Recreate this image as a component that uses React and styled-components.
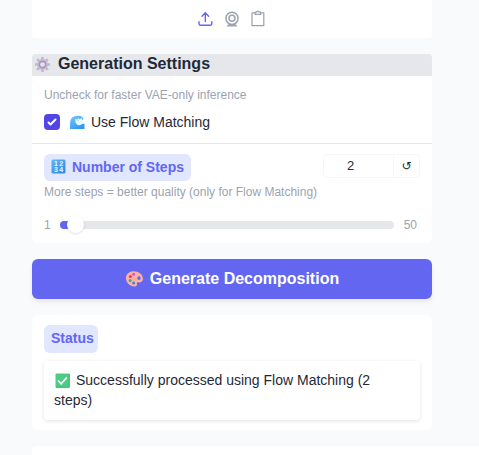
import React from "react";
import styled, { createGlobalStyle } from "styled-components";

const Global = createGlobalStyle`
  * { box-sizing: border-box; }
  html, body { margin: 0; height: 100%; overflow: hidden; }
  body { background: #f9fafc; color: #1f2937; font-family: "Liberation Sans", Arial, sans-serif; }
`;
const Page = styled.main`
  display: flex;
  flex-direction: column;
  gap: 16px;
  width: 479px;
  height: 455px;
  padding-left: 32px;
  overflow: hidden;
`;
const Card = styled.section`
  flex: none;
  width: 400px;
  background: #fff;
  border-radius: 6px;
  overflow: hidden;
`;
const Sources = styled(Card)`
  display: flex;
  justify-content: center;
  gap: 8px;
  height: 38px;
  padding: 10px 3px 0 0;
  border-radius: 0 0 4px 4px;
  svg { display: block; }
`;
const Settings = styled(Card)`
  height: 189px;
  border-radius: 4px 4px 6px 6px;
`;
const Heading = styled.h3`
  display: flex;
  align-items: center;
  gap: 7px;
  height: 22px;
  margin: 0;
  padding: 0 0 2px 2px;
  background: #e5e7eb;
  font-size: 16px;
  line-height: 20px;
  white-space: nowrap;
`;
const Label = styled.span`
  white-space: nowrap;
`;
const Option = styled.div`
  height: 68px;
  padding: 11px 12px 0;
  border-bottom: 1px solid #e5e7eb;
`;
const Hint = styled.p`
  margin: 0;
  font-size: 12px;
  line-height: 16px;
  color: #9ca3af;
  white-space: nowrap;
`;
const CheckRow = styled.label`
  display: flex;
  align-items: center;
  height: 20px;
  margin-top: 9px;
  font-size: 14px;
  line-height: 20px;
`;
const Check = styled.span`
  display: flex;
  align-items: center;
  justify-content: center;
  width: 16px;
  height: 16px;
  margin-right: 10px;
  border-radius: 4px;
  background: #4f46e5;
`;
const CheckText = styled(Label)`
  margin-left: 6px;
`;
const Steps = styled.div`
  padding: 10px 12px 0;
`;
const StepsTop = styled.div`
  display: flex;
  justify-content: space-between;
  align-items: flex-start;
  height: 30px;
`;
const Pill = styled.div`
  display: flex;
  align-items: center;
  gap: 6px;
  width: ${(p) => p.$width};
  height: ${(p) => p.$height};
  padding: 0 7px 2px;
  border-radius: 6px;
  background: #e0e7ff;
  color: #6366f1;
  font-size: 14px;
  font-weight: 700;
`;
const NumberBox = styled.div`
  display: flex;
  width: 97px;
  height: 24px;
  border: 1px solid #f6f7f9;
  border-radius: 4px;
  font-size: 14px;
  line-height: 22px;
`;
const Value = styled.span`
  width: 70px;
  padding-right: 16px;
  text-align: center;
  font-size: 13px;
  border-right: 1px solid #f6f7f9;
`;
const Reset = styled.button`
  flex: 1;
  padding: 0;
  border: 0;
  background: none;
  color: #1f2937;
  font: 12px/20px "DejaVu Sans", sans-serif;
`;
const SliderRow = styled.div`
  display: flex;
  align-items: center;
  height: 18px;
  margin-top: 16px;
  font-size: 12px;
  color: #9ca3af;
`;
const Track = styled.div`
  display: flex;
  align-items: center;
  width: 334px;
  height: 8px;
  margin: 0 10px 0 9px;
  border-radius: 4px;
  background: linear-gradient(to right, #6366f1 15px, #e5e7eb 15px);
`;
const Thumb = styled.span`
  width: 17px;
  height: 17px;
  margin: -2px 0 0 7px;
  border-radius: 50%;
  background: #fff;
  box-shadow: 0 1px 3px rgba(0, 0, 0, 0.12);
`;
const Generate = styled.button`
  display: flex;
  flex: none;
  align-items: center;
  justify-content: center;
  gap: 7px;
  width: 400px;
  height: 40px;
  padding: 0 0 1px 1px;
  border: 0;
  border-radius: 6px;
  background: #6366f1;
  color: #fff;
  font: 700 16px "Liberation Sans", Arial, sans-serif;
  box-shadow: 0 3px 5px rgba(0, 0, 0, 0.07);
`;
const StatusCard = styled(Card)`
  height: 115px;
  padding: 10px 12px;
`;
const Message = styled.div`
  height: 59px;
  margin-top: 8px;
  padding: 9px 10px;
  border-radius: 4px;
  font-size: 14px;
  line-height: 20px;
  box-shadow: 0 1px 4px rgba(0, 0, 0, 0.11);
`;
const MessageLine = styled.div`
  display: flex;
  align-items: center;
  height: 20px;
  gap: 6px;
  padding-left: ${(p) => p.$indent || "0"};
`;
const NextCard = styled(Card)`
  width: 447px;
  height: 30px;
  border-radius: 4px 0 0 0;
`;

const UploadIcon = () => (
  <svg width="18" height="18" viewBox="0 0 18 18" fill="none" stroke="#6366f1" strokeWidth="1.4" strokeLinecap="round" strokeLinejoin="round">
    <path d="M3 11.7v2.1A1.5 1.5 0 0 0 4.5 15.3h9.8a1.5 1.5 0 0 0 1.5-1.5v-2.1M9.3 11.5V3M6 6.2l3.3-3.4 3.3 3.4" />
  </svg>
);
const WebcamIcon = () => (
  <svg width="18" height="18" viewBox="0 0 18 18" fill="none" stroke="#9ca3af">
    <circle cx="10" cy="8.3" r="6.1" strokeWidth="1.5" />
    <circle cx="10" cy="8.3" r="3" strokeWidth="1.5" />
    <path d="M6.4 14.3h7.2l1.2 1.9H5.2z" fill="#9ca3af" strokeWidth=".5" />
  </svg>
);
const ClipboardIcon = () => (
  <svg width="18" height="18" viewBox="0 0 18 18" fill="none" stroke="#9ca3af" strokeWidth="1.25" strokeLinejoin="round">
    <path d="M7 2.9H4v12.8h11.8V2.9h-3" />
    <path d="M7.2 2.1h1.2a1.6 1.2 0 0 1 3 0h1.2v2.3H7.2z" />
  </svg>
);
const GearIcon = () => (
  <svg width="17" height="17" viewBox="0 0 17 17">
    <g stroke="#c3b5d6" strokeWidth="2.6">
      <path d="M8.5 1v15M1 8.5h15" />
      <path d="m3.2 3.2 10.6 10.6M13.8 3.2 3.2 13.8" />
    </g>
    <circle cx="8.5" cy="8.5" r="5.4" fill="#c3b7d2" />
    <circle cx="8.5" cy="8.5" r="3" fill="#e5e2ea" stroke="#a497b6" strokeWidth="1.3" />
  </svg>
);
const CheckIcon = () => (
  <svg width="16" height="16" viewBox="0 0 16 16" fill="#fff">
    <path d="M12.207 4.793a1 1 0 0 1 0 1.414l-5 5a1 1 0 0 1-1.414 0l-2-2a1 1 0 0 1 1.414-1.414L6.5 9.086l4.293-4.293a1 1 0 0 1 1.414 0z" />
  </svg>
);
const WaveIcon = () => (
  <svg width="15" height="14" viewBox="0 0 15 14">
    <defs>
      <linearGradient id="sea" x2=".7" y2="1">
        <stop stopColor="#78c8ff" />
        <stop offset="1" stopColor="#2f96f0" />
      </linearGradient>
    </defs>
    <path d="M0 14V8Q.2.7 8 .7c3 0 4.8 1 5.3 2.6L12.5 8l2 1V14z" fill="url(#sea)" />
    <path d="M5.2 3.8 7 4.5 8.2 3l1.6 1.2L12 2.7l.3 2 1.6.4-.9 1.6.6 1.7-2.2 1.2Q8.5 11 6.5 9 4.8 7.5 5.2 3.8z" fill="#e8faff" />
    <path d="m7 4.6 1.2 1 1.3-1" fill="none" stroke="#8fd6fa" strokeWidth=".8" />
  </svg>
);
const NumbersIcon = () => (
  <svg width="15" height="15" viewBox="0 0 15 15">
    <defs>
      <linearGradient id="keypad" x2=".7" y2="1">
        <stop stopColor="#60b5f8" />
        <stop offset="1" stopColor="#348be5" />
      </linearGradient>
    </defs>
    <rect x=".5" y=".5" width="14" height="14" rx="1.5" fill="url(#keypad)" />
    <g fill="#eaf6ff" fontFamily="Liberation Sans" fontSize="7" fontWeight="700">
      <text x="3" y="7">1</text>
      <text x="8.3" y="7">2</text>
      <text x="3" y="13">3</text>
      <text x="8.3" y="13">4</text>
    </g>
  </svg>
);
const PaletteIcon = () => (
  <svg width="17" height="16" viewBox="0 0 17 16">
    <path fillRule="evenodd" d="M7.5.3C3 .3 0 3.5 0 7.3c0 4.6 4 8.2 8.5 8.2 2 0 2.7-1 2.4-2.5-.3-1.5.4-2 2-1.7 2.5.5 4-1.3 4-3.5C16.8 3.2 12.5.3 7.5.3zM13 5.2a1.7 1.9 0 1 1 0 3.8 1.7 1.9 0 0 1 0-3.8z" fill="#ffb09f" />
    <circle cx="7.6" cy="3.3" r="1.5" fill="#c95be0" />
    <circle cx="4.4" cy="5.6" r="1.5" fill="#e9377f" />
    <circle cx="4.2" cy="9.5" r="1.5" fill="#39a9a2" />
    <circle cx="7.6" cy="12" r="1.5" fill="#378bd1" />
  </svg>
);
const SuccessIcon = () => (
  <svg width="15" height="15" viewBox="0 0 15 15">
    <rect x=".5" y=".5" width="14" height="14" rx="1" fill="#4dcc83" />
    <path d="M.8 14.3h13.5V1" fill="none" stroke="#35a565" strokeWidth=".8" />
    <path d="m3 7.5 3.2 3.3 5.7-6.4" fill="none" stroke="#fff" strokeWidth="1.6" />
  </svg>
);

export default function App() {
  return (
    <>
      <Global />
      <Page>
        <Sources>
          <UploadIcon />
          <WebcamIcon />
          <ClipboardIcon />
        </Sources>
        <Settings>
          <Heading><GearIcon /><Label>Generation Settings</Label></Heading>
          <Option>
            <Hint>Uncheck for faster VAE-only inference</Hint>
            <CheckRow>
              <Check><CheckIcon /></Check>
              <WaveIcon />
              <CheckText>Use Flow Matching</CheckText>
            </CheckRow>
          </Option>
          <Steps>
            <StepsTop>
              <Pill $width="147px" $height="27px"><NumbersIcon /><Label>Number of Steps</Label></Pill>
              <NumberBox><Value>2</Value><Reset>↺</Reset></NumberBox>
            </StepsTop>
            <Hint>More steps = better quality (only for Flow Matching)</Hint>
            <SliderRow>
              <Label>1</Label>
              <Track><Thumb /></Track>
              <Label>50</Label>
            </SliderRow>
          </Steps>
        </Settings>
        <Generate><PaletteIcon /><Label>Generate Decomposition</Label></Generate>
        <StatusCard>
          <Pill $width="54px" $height="28px"><Label>Status</Label></Pill>
          <Message>
            <MessageLine $indent="1px"><SuccessIcon /><Label>Successfully processed using Flow Matching (2</Label></MessageLine>
            <MessageLine>steps)</MessageLine>
          </Message>
        </StatusCard>
        <NextCard />
      </Page>
    </>
  );
}
